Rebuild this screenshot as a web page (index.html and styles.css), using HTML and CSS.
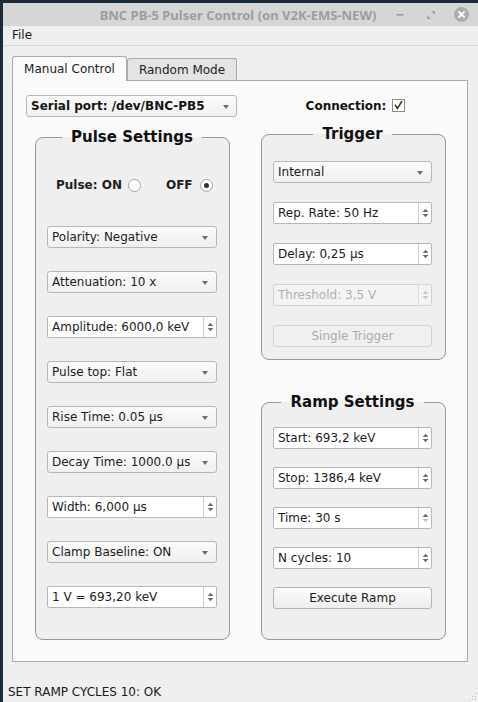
FILE: index.html
```html
<!DOCTYPE html>
<html>
<head>
<meta charset="utf-8">
<title>BNC PB-5 Pulser Control</title>
<link rel="stylesheet" href="styles.css">
</head>
<body>
<div class="window">
  <div class="titlebar">
    <div></div>
    <div class="title">BNC PB-5 Pulser Control (on V2K-EMS-NEW)</div>
    <div class="wm-buttons">
      <svg class="wm-min" width="8" height="4" viewBox="0 0 8 4"><rect x="0.5" y="1" width="7" height="1.6" fill="#9a9a9a"/></svg>
      <svg class="wm-max" width="8" height="8" viewBox="0 0 8 8"><polygon points="4,0 8,0 8,4" fill="#a3a3a3"/><polygon points="0,4 0,8 4,8" fill="#a3a3a3"/></svg>
      <svg class="wm-close" width="15" height="15" viewBox="0 0 15 15"><circle cx="7.5" cy="7.5" r="7.5" fill="#adadad"/><path d="M5 5 L10 10 M10 5 L5 10" stroke="#ffffff" stroke-width="1.8" stroke-linecap="round"/></svg>
    </div>
  </div>
  <div class="menubar"><span class="menu-item">File</span></div>
  <div class="central">
    <div class="tabs">
      <div class="tab tab-active">Manual Control</div>
      <div class="tab">Random Mode</div>
    </div>
    <div class="panel">
      <div class="col col-left">
        <div class="combo combo-bold">Serial port: /dev/BNC-PB5</div>
        <fieldset class="group group-pulse">
          <legend>Pulse Settings</legend>
          <div class="radio-row">
            <span class="radio-label">Pulse: ON</span>
            <span class="radio"></span>
            <span class="radio-label radio-off">OFF</span>
            <span class="radio radio-checked"></span>
          </div>
          <div class="stack stack-pulse">
            <div class="combo">Polarity: Negative</div>
            <div class="combo">Attenuation: 10 x</div>
            <div class="spin"><span class="spin-text">Amplitude: 6000,0 keV</span><span class="spin-btns"><svg width="7" height="10" viewBox="0 0 7 10"><polygon points="0.5,4 3.5,0.8 6.5,4" /><polygon points="0.5,6 3.5,9.2 6.5,6" /></svg></span></div>
            <div class="combo">Pulse top: Flat</div>
            <div class="combo">Rise Time: 0.05 µs</div>
            <div class="combo">Decay Time: 1000.0 µs</div>
            <div class="spin"><span class="spin-text">Width: 6,000 µs</span><span class="spin-btns"><svg width="7" height="10" viewBox="0 0 7 10"><polygon points="0.5,4 3.5,0.8 6.5,4" /><polygon points="0.5,6 3.5,9.2 6.5,6" /></svg></span></div>
            <div class="combo">Clamp Baseline: ON</div>
            <div class="spin"><span class="spin-text">1 V = 693,20 keV</span><span class="spin-btns"><svg width="7" height="10" viewBox="0 0 7 10"><polygon points="0.5,4 3.5,0.8 6.5,4" /><polygon points="0.5,6 3.5,9.2 6.5,6" /></svg></span></div>
          </div>
        </fieldset>
      </div>
      <div class="col col-right">
        <div class="conn">
          <span class="conn-label">Connection:</span>
          <span class="checkbox"><svg width="11" height="10" viewBox="0 0 11 10"><path d="M2 4.6 L4.4 8.4 L9 1.2" fill="none" stroke="#2b2b2b" stroke-width="1.5"/></svg></span>
        </div>
        <fieldset class="group group-trigger">
          <legend>Trigger</legend>
          <div class="stack stack-trigger">
            <div class="combo">Internal</div>
            <div class="spin"><span class="spin-text">Rep. Rate: 50 Hz</span><span class="spin-btns"><svg width="7" height="10" viewBox="0 0 7 10"><polygon points="0.5,4 3.5,0.8 6.5,4" /><polygon points="0.5,6 3.5,9.2 6.5,6" /></svg></span></div>
            <div class="spin"><span class="spin-text">Delay: 0,25 µs</span><span class="spin-btns"><svg width="7" height="10" viewBox="0 0 7 10"><polygon points="0.5,4 3.5,0.8 6.5,4" /><polygon points="0.5,6 3.5,9.2 6.5,6" /></svg></span></div>
            <div class="spin spin-disabled"><span class="spin-text">Threshold: 3,5 V</span><span class="spin-btns"><svg width="7" height="10" viewBox="0 0 7 10"><polygon points="0.5,4 3.5,0.8 6.5,4" /><polygon points="0.5,6 3.5,9.2 6.5,6" /></svg></span></div>
            <div class="button button-disabled">Single Trigger</div>
          </div>
        </fieldset>
        <fieldset class="group group-ramp">
          <legend>Ramp Settings</legend>
          <div class="stack stack-ramp">
            <div class="spin"><span class="spin-text">Start: 693,2 keV</span><span class="spin-btns"><svg width="7" height="10" viewBox="0 0 7 10"><polygon points="0.5,4 3.5,0.8 6.5,4" /><polygon points="0.5,6 3.5,9.2 6.5,6" /></svg></span></div>
            <div class="spin"><span class="spin-text">Stop: 1386,4 keV</span><span class="spin-btns"><svg width="7" height="10" viewBox="0 0 7 10"><polygon points="0.5,4 3.5,0.8 6.5,4" /><polygon points="0.5,6 3.5,9.2 6.5,6" /></svg></span></div>
            <div class="spin"><span class="spin-text">Time: 30 s</span><span class="spin-btns spin-btns-min"><svg width="7" height="10" viewBox="0 0 7 10"><polygon points="0.5,4 3.5,0.8 6.5,4" /><polygon class="arrow-off" points="0.5,6 3.5,9.2 6.5,6" /></svg></span></div>
            <div class="spin"><span class="spin-text">N cycles: 10</span><span class="spin-btns"><svg width="7" height="10" viewBox="0 0 7 10"><polygon points="0.5,4 3.5,0.8 6.5,4" /><polygon points="0.5,6 3.5,9.2 6.5,6" /></svg></span></div>
            <div class="button">Execute Ramp</div>
          </div>
        </fieldset>
      </div>
    </div>
  </div>
  <div class="statusbar">
    <span class="status-text">SET RAMP CYCLES 10: OK</span>
    <svg class="grip" width="10" height="10" viewBox="0 0 10 10">
      <rect x="8" y="2" width="1" height="1" fill="#b8b8b8"/>
      <rect x="5" y="5" width="1" height="1" fill="#b8b8b8"/>
      <rect x="8" y="5" width="1" height="1" fill="#b8b8b8"/>
      <rect x="2" y="8" width="1" height="1" fill="#b8b8b8"/>
      <rect x="5" y="8" width="1" height="1" fill="#b8b8b8"/>
      <rect x="8" y="8" width="1" height="1" fill="#b8b8b8"/>
    </svg>
  </div>
</div>
</body>
</html>
```
FILE: styles.css
```css
* {
  box-sizing: border-box;
}

html, body {
  margin: 0;
  height: 100%;
}

body {
  background: #1d2a38;
  padding: 3px 0 0 3px;
  font-family: "DejaVu Sans", sans-serif;
  font-size: 12px;
  color: #202020;
  overflow: hidden;
}

.window {
  width: 475px;
  height: 699px;
  background: #efefef;
  display: flex;
  flex-direction: column;
}

/* title bar */
.titlebar {
  height: 23px;
  flex: none;
  background: #d6d6d6;
  display: grid;
  grid-template-columns: 1fr auto 1fr;
  align-items: center;
}

.title {
  font-family: "Noto Sans", sans-serif;
  font-weight: 700;
  font-size: 13px;
  color: #9d9d9d;
  margin-right: 5px;
  white-space: nowrap;
}

.wm-buttons {
  display: flex;
  justify-content: flex-end;
  align-items: center;
  padding-right: 9px;
}

.wm-min {
  margin-right: 23px;
  margin-top: 1px;
}

.wm-max {
  margin-right: 19px;
}

/* menu */
.menubar {
  height: 20px;
  flex: none;
  border-bottom: 1px solid #d9d9d9;
  padding-left: 9px;
  line-height: 19px;
  color: #1a1a1a;
}

/* central */
.central {
  flex: none;
  padding: 10px 10px 0 9px;
}

.tabs {
  display: flex;
  align-items: flex-end;
  height: 24px;
}

.tab {
  height: 22px;
  width: 110px;
  border: 1px solid #ababab;
  border-bottom: none;
  border-radius: 3px 3px 0 0;
  background: #e4e4e4;
  text-align: center;
  line-height: 22px;
  color: #1e1e1e;
}

.tab-active {
  position: relative;
  z-index: 1;
  width: 115px;
  height: 25px;
  margin-bottom: -1px;
  background: #fafafa;
  line-height: 24px;
}

.panel {
  height: 582px;
  border: 1px solid #a9a9a9;
  background: #fafafa;
  display: flex;
  gap: 24px;
  padding: 14px 0 0 13px;
}

.col {
  display: flex;
  flex-direction: column;
}

.col-left {
  width: 211px;
}

.col-right {
  width: 185px;
}

/* group boxes */
.group {
  margin: 0;
  min-width: 0;
  border: 1px solid #979797;
  border-radius: 8px;
  background: #efefef;
}

.group legend {
  margin: 0 auto;
  padding: 0 9px;
  font-size: 15px;
  font-weight: 700;
  line-height: 18px;
  color: #111111;
}

.group-pulse {
  margin: 11px 7px 0 9px;
  padding: 31px 12px 31px 11px;
}

.group-trigger {
  margin-top: 12px;
  padding: 18px 13px 12px 11px;
}

.group-ramp {
  margin-top: 33px;
  padding: 16px 13px 30px 11px;
}

.stack {
  display: flex;
  flex-direction: column;
}

.stack-pulse {
  gap: 23px;
  margin-top: 33px;
}

.stack-trigger {
  gap: 19px;
}

.stack-ramp {
  gap: 18px;
}

/* radio row */
.radio-row {
  display: flex;
  align-items: center;
  height: 16px;
  padding-left: 9px;
  font-weight: 700;
}

.radio {
  width: 13px;
  height: 13px;
  border-radius: 50%;
  border: 1px solid #a3a3a3;
  background: #ffffff;
  margin-left: 6px;
  display: flex;
  align-items: center;
  justify-content: center;
}

.radio-checked::after {
  content: "";
  width: 5px;
  height: 5px;
  border-radius: 50%;
  background: #333333;
}

.radio-off {
  margin-left: 25px;
}

.radio-off + .radio {
  margin-left: 7px;
}

/* combo boxes */
.combo {
  height: 22px;
  flex: none;
  border: 1px solid #b7b7b7;
  border-radius: 3px;
  background: linear-gradient(#fbfbfb, #f0f0f0);
  padding-left: 4px;
  line-height: 20px;
  display: flex;
  align-items: center;
  justify-content: space-between;
  white-space: nowrap;
  color: #1c1c1c;
}

.combo::after {
  content: "";
  flex: none;
  width: 0;
  height: 0;
  border-left: 3.5px solid transparent;
  border-right: 3.5px solid transparent;
  border-top: 4px solid #6b6b6b;
  margin-right: 8px;
  margin-top: 1px;
}

.combo-bold {
  font-weight: 700;
  color: #141414;
}

.combo-bold::after {
  margin-right: 7px;
}

/* spin boxes */
.spin {
  height: 22px;
  flex: none;
  border: 1px solid #b7b7b7;
  border-radius: 2px;
  background: #ffffff;
  display: flex;
  align-items: stretch;
  color: #1c1c1c;
}

.spin-text {
  flex: 1;
  padding-left: 4px;
  line-height: 20px;
  white-space: nowrap;
}

.spin-btns {
  width: 13px;
  flex: none;
  border-left: 1px solid #cdcdcd;
  display: flex;
  align-items: center;
  justify-content: center;
}

.spin-btns svg {
  fill: #6e6e6e;
}

.spin-btns-min .arrow-off {
  fill: #c2c2c2;
}

.spin-disabled {
  background: #f3f3f3;
  border-color: #d3d3d3;
  color: #b0b0b0;
}

.spin-disabled .spin-btns {
  border-left-color: #dddddd;
}

.spin-disabled .spin-btns svg {
  fill: #c6c6c6;
}

/* buttons */
.button {
  height: 22px;
  flex: none;
  border: 1px solid #b5b5b5;
  border-radius: 3px;
  background: linear-gradient(#fbfbfb, #ededed);
  text-align: center;
  line-height: 20px;
  color: #1c1c1c;
}

.button-disabled {
  background: #f0f0f0;
  border-color: #d2d2d2;
  color: #ababab;
}

/* connection */
.conn {
  margin-top: 2px;
  height: 16px;
  display: flex;
  align-items: center;
  justify-content: center;
  font-weight: 700;
  color: #141414;
  padding-left: 4px;
}

.conn-label {
  margin-top: 2px;
}

.checkbox {
  width: 13px;
  height: 13px;
  border: 1px solid #8c8c8c;
  background: #ffffff;
  margin-left: 6px;
  display: flex;
  align-items: center;
  justify-content: center;
}

/* status bar */
.statusbar {
  flex: 1;
  display: flex;
  justify-content: space-between;
  align-items: flex-end;
  padding: 0 1px 1px 5px;
}

.status-text {
  line-height: 14px;
  margin-bottom: 2px;
  color: #1a1a1a;
}
```
